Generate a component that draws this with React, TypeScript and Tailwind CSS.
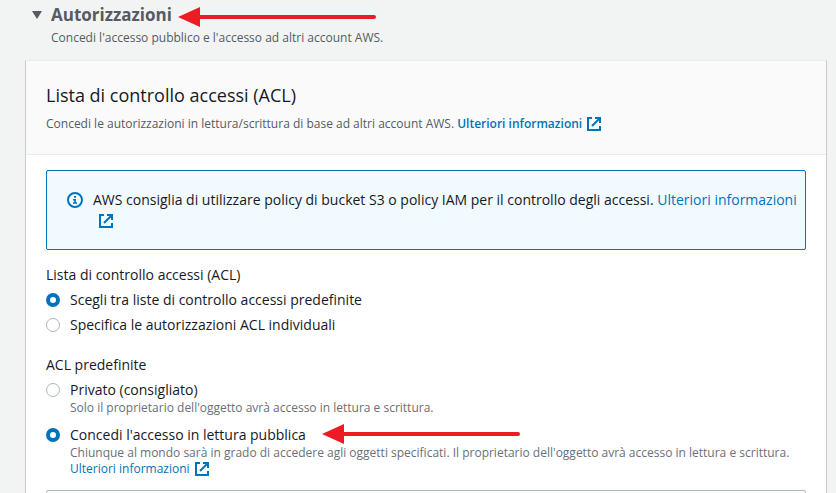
import type { ReactNode } from "react";

function ExternalIcon({ className = "" }: { className?: string }) {
  return (
    <svg
      viewBox="0 0 14 14"
      className={`inline-block size-3.5 shrink-0 align-[-3px] ${className}`}
      fill="none"
      stroke="#0073bb"
      strokeWidth="2"
      aria-hidden="true"
    >
      <path d="M5 1H1v12h12V9" />
      <path d="M8 1h5v5M13 1L5 9" />
    </svg>
  );
}

function InfoIcon() {
  return (
    <svg viewBox="0 0 16 16" className="mt-0.5 size-4 shrink-0" fill="none" stroke="#0073bb" strokeWidth="2" aria-hidden="true">
      <circle cx="8" cy="8" r="7" />
      <path d="M7 4.9h2M6 7.7h3M8 7v4M6 11h4" strokeWidth="1.6" />
    </svg>
  );
}

function Arrow({ className = "" }: { className?: string }) {
  return (
    <svg viewBox="0 0 198 20" className={`absolute h-5 w-[198px] ${className}`} aria-hidden="true">
      <path d="M0 10L22 0v20z" fill="#ed1c24" />
      <path d="M20 10H196" stroke="#ed1c24" strokeWidth="4" strokeLinecap="round" />
    </svg>
  );
}

function LearnMore({ className = "", iconClass = "ml-0.5" }: { className?: string; iconClass?: string }) {
  return (
    <a href="#info" className={`text-[#0073bb] ${className}`}>
      <span className="whitespace-nowrap">Ulteriori informazioni</span> <ExternalIcon className={iconClass} />
    </a>
  );
}

type OptionProps = {
  id: string;
  name: string;
  label: string;
  checked?: boolean;
  children?: ReactNode;
};

function Option({ id, name, label, checked, children }: OptionProps) {
  return (
    <div className="flex gap-2.5">
      <input
        type="radio"
        id={id}
        name={name}
        defaultChecked={checked}
        className="mt-[3px] size-3.5 shrink-0 appearance-none rounded-full border border-[#aab7b8] bg-white checked:border-4 checked:border-[#0073bb]"
      />
      <div className="min-w-0 flex-1">
        <label htmlFor={id} className="block leading-5">
          {label}
        </label>
        {children}
      </div>
    </div>
  );
}

export default function App() {
  return (
    <main className="h-screen overflow-hidden bg-[#f2f3f3] pr-[9px] pl-[25px] font-['Open_Sans','Noto_Sans',sans-serif] text-sm leading-5 text-[#16191f]">
      <header className="h-[60px] pt-1 text-[#545b64]">
        <h2 className="relative w-fit text-[17px] leading-[22px] font-bold">
          <button type="button" aria-expanded="true" className="flex items-center">
            <svg viewBox="0 0 10 8" className="mr-[9px] ml-[7px] h-2 w-2.5" fill="#545b64" aria-hidden="true">
              <path d="M0 0h10L5 8z" />
            </svg>
            Autorizzazioni
          </button>
          <Arrow className="top-[3px] left-full ml-1.5" />
        </h2>
        <p className="pl-[26px] text-xs leading-6">Concedi l'accesso pubblico e l'accesso ad altri account AWS.</p>
      </header>

      <section className="border border-t-[#eaeded] border-r-[#c8cccc] border-l-[#c8cccc] bg-white">
        <div className="border-b border-[#eaeded] bg-[#fafafa] px-5 pt-[22px] pb-[21px]">
          <h3 className="text-lg leading-6">Lista di controllo accessi (ACL)</h3>
          <p className="mt-2 text-xs leading-[18px] text-[#545b64]">
            Concedi le autorizzazioni in lettura/scrittura di base ad altri account AWS.{" "}
            <LearnMore className="font-semibold" />
          </p>
        </div>

        <div className="px-5 pt-[15px]">
          <div className="flex h-20 gap-2.5 rounded-xs border border-[#0073bb] bg-[#f1faff] pt-[19px] pl-5">
            <InfoIcon />
            <p>
              AWS consiglia di utilizzare policy di bucket S3 o policy IAM per il controllo degli accessi.{" "}
              <LearnMore iconClass="ml-1.5" />
            </p>
          </div>

          <fieldset className="mt-[15px] flex flex-col gap-[5px]">
            <legend className="mb-[5px]">Lista di controllo accessi (ACL)</legend>
            <Option id="predefined" name="acl-mode" label="Scegli tra liste di controllo accessi predefinite" checked />
            <Option id="individual" name="acl-mode" label="Specifica le autorizzazioni ACL individuali" />
          </fieldset>

          <fieldset className="relative mt-5">
            <legend className="mb-[5px]">ACL predefinite</legend>
            <div className="flex flex-col gap-[9px]">
              <Option id="private" name="canned-acl" label="Privato (consigliato)">
                <p className="text-xs leading-4 text-[#687078]">
                  Solo il proprietario dell'oggetto avrà accesso in lettura e scrittura.
                </p>
              </Option>
              <Option id="public" name="canned-acl" label="Concedi l'accesso in lettura pubblica" checked>
                <p className="text-xs leading-4 text-[#687078]">
                  Chiunque al mondo sarà in grado di accedere agli oggetti specificati. Il proprietario dell'oggetto
                  avrà accesso in lettura e scrittura.
                  <LearnMore className="block" />
                </p>
              </Option>
            </div>
            <Arrow className="top-11 left-[276px]" />
          </fieldset>

          <div className="mt-[13px] h-20 rounded-xs border border-[#aab7b8]" />
        </div>
      </section>
    </main>
  );
}
